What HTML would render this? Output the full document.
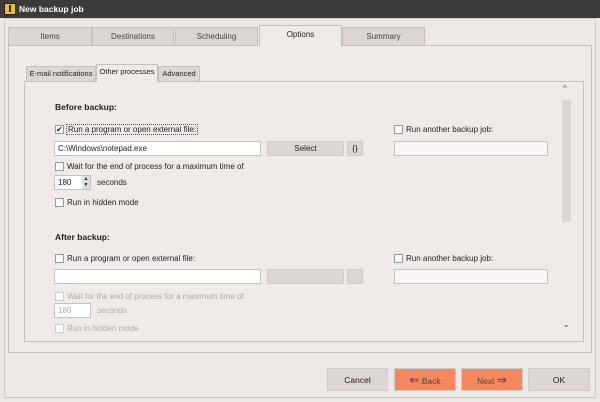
<!DOCTYPE html><html><head><style>
*{box-sizing:border-box;margin:0;padding:0}
body{width:600px;height:402px;background:#ece8e5;font-family:"Liberation Sans",sans-serif;font-size:8px;color:#222;position:relative;overflow:hidden}
.a{position:absolute}
.tab{position:absolute;top:27px;height:19px;background:#ddd6d2;border:1px solid #c8c0bb;text-align:center;line-height:17px;color:#444}
.itab{position:absolute;top:66px;height:16px;background:#ddd6d2;border:1px solid #c8c0bb;text-align:center;line-height:14px;font-size:7.5px}
.cb{position:absolute;width:9px;height:9px;border:1px solid #999;background:#fff}
.inp{position:absolute;height:15px;background:#fff;border:1px solid #c8c0bb;padding-left:3px;line-height:13px}
.btn{position:absolute;height:15px;background:#ddd6d2;border:1px solid #ccc;text-align:center;line-height:13px}
.bb{position:absolute;top:368px;height:23px;text-align:center;line-height:23px;font-size:8.5px;border:1px solid #ccc}
.dis{color:#aaa}
</style></head><body>
<div class="a" style="left:0;top:0;width:600px;height:18px;background:#3d3b39"></div>
<div class="a" style="left:4px;top:3px;width:12px;height:12px;background:#f0c020;border:1px solid #222"></div>
<div class="a" style="left:9px;top:5px;width:2px;height:7px;background:#222"></div>
<div class="a" style="left:19px;top:4px;color:#fff;font-weight:bold;font-size:8.5px">New backup job</div>
<div class="a" style="left:4px;top:18px;width:592px;height:380px;border:1px solid #d0c8c3"></div>
<div class="a" style="left:8px;top:45px;width:584px;height:308px;border:1px solid #c8c0bb;background:#efebe8"></div>
<div class="tab" style="left:8px;width:84px">Items</div>
<div class="tab" style="left:92px;width:82px">Destinations</div>
<div class="tab" style="left:175px;width:83px">Scheduling</div>
<div class="tab" style="left:259px;top:25px;height:22px;width:83px;background:#efebe8;border-bottom:none;color:#222">Options</div>
<div class="tab" style="left:342px;width:83px">Summary</div>
<div class="a" style="left:24px;top:81px;width:560px;height:261px;border:1px solid #c8c0bb;background:#f0ebe8;overflow:hidden">
<div class="cb" style="left:30px;top:242px;border-color:#ccc"></div>
<div class="a dis" style="left:42px;top:242px">Run in hidden mode</div>
</div>
<div class="itab" style="left:26px;width:70px">E-mail notifications</div>
<div class="itab" style="left:96px;top:64px;height:18px;width:62px;background:#f0ebe8;border-bottom:none">Other processes</div>
<div class="itab" style="left:158px;width:42px">Advanced</div>
<div class="a" style="left:563px;top:84px;color:#555">^</div>
<div class="a" style="left:562px;top:100px;width:9px;height:122px;background:#ddd6d2"></div>
<div class="a" style="left:563px;top:320px;color:#555">⌄</div>
<div class="a" style="left:55px;top:102px;font-weight:bold;font-size:8.5px">Before backup:</div>
<div class="cb" style="left:55px;top:125px;font-size:8px;line-height:7px">✔</div>
<div class="a" style="left:66px;top:124px;border:1px dotted #555;padding:0 1px">Run a program or open external file:</div>
<div class="inp" style="left:54px;top:141px;width:207px">C:\Windows\notepad.exe</div>
<div class="btn" style="left:267px;top:141px;width:77px">Select</div>
<div class="btn" style="left:347px;top:141px;width:16px">{}</div>
<div class="cb" style="left:394px;top:125px"></div>
<div class="a" style="left:406px;top:125px">Run another backup job:</div>
<div class="inp" style="left:394px;top:141px;width:154px;background:#f8f6f5"></div>
<div class="cb" style="left:55px;top:162px"></div>
<div class="a" style="left:67px;top:162px">Wait for the end of process for a maximum time of</div>
<div class="inp" style="left:54px;top:175px;width:37px">180</div>
<div class="a" style="left:82px;top:176px;width:8px;height:13px;background:#ddd;font-size:5px;line-height:6px;text-align:center">▲<br>▼</div>
<div class="a" style="left:97px;top:178px">seconds</div>
<div class="cb" style="left:55px;top:198px"></div>
<div class="a" style="left:67px;top:198px">Run in hidden mode</div>
<div class="a" style="left:55px;top:232px;font-weight:bold;font-size:8.5px">After backup:</div>
<div class="cb" style="left:55px;top:254px"></div>
<div class="a" style="left:67px;top:254px">Run a program or open external file:</div>
<div class="inp" style="left:54px;top:269px;width:207px"></div>
<div class="btn" style="left:267px;top:269px;width:77px"></div>
<div class="btn" style="left:347px;top:269px;width:16px"></div>
<div class="cb" style="left:394px;top:254px"></div>
<div class="a" style="left:406px;top:254px">Run another backup job:</div>
<div class="inp" style="left:394px;top:269px;width:154px;background:#f8f6f5"></div>
<div class="cb" style="left:55px;top:292px;border-color:#ccc"></div>
<div class="a dis" style="left:67px;top:292px">Wait for the end of process for a maximum time of</div>
<div class="inp dis" style="left:54px;top:303px;width:37px">180</div>
<div class="a dis" style="left:97px;top:306px">seconds</div>
<div class="bb" style="left:327px;width:61px;background:#ddd6d2">Cancel</div>
<div class="bb" style="left:394px;width:62px;background:#f5875c;color:#444"><span style="color:#2a3a80;font-size:12px">⇐</span> Back</div>
<div class="bb" style="left:461px;width:62px;background:#f5875c;color:#444">Next <span style="color:#2a3a80;font-size:12px">⇒</span></div>
<div class="bb" style="left:528px;width:62px;background:#ddd6d2">OK</div>
</body></html>
